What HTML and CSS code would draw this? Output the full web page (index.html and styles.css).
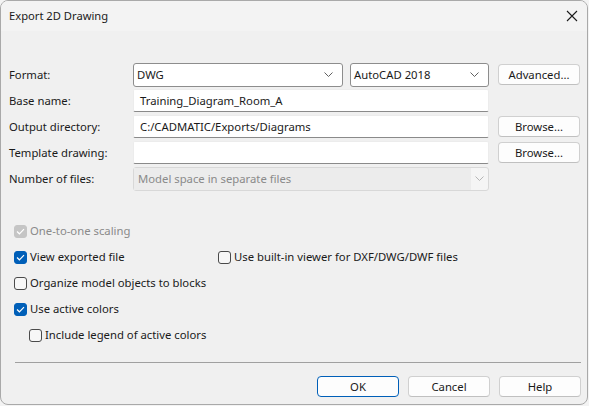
FILE: index.html
```html
<!DOCTYPE html>
<html lang="en">
<head>
<meta charset="utf-8">
<title>Export 2D Drawing</title>
<link rel="stylesheet" href="styles.css">
</head>
<body>
<div class="window">
  <div class="titlebar">
    <span class="title">Export 2D Drawing</span>
    <svg class="close" width="12" height="12" viewBox="0 0 12 12"><path d="M1 1 L11 11 M11 1 L1 11" stroke="#1b1b1b" stroke-width="1.1" fill="none"/></svg>
  </div>
  <div class="body">
    <div class="form">
      <label class="lbl">Format:</label>
      <div class="combo c-format"><span>DWG</span><svg class="chev" width="9" height="5" viewBox="0 0 9 5"><path d="M0.5 0.5 L4.5 4.5 L8.5 0.5" stroke="#606060" fill="none"/></svg></div>
      <div class="combo c-version"><span>AutoCAD 2018</span><svg class="chev" width="9" height="5" viewBox="0 0 9 5"><path d="M0.5 0.5 L4.5 4.5 L8.5 0.5" stroke="#606060" fill="none"/></svg></div>
      <button class="btn b-side">Advanced...</button>

      <label class="lbl">Base name:</label>
      <div class="edit span">Training_Diagram_Room_A</div>

      <label class="lbl">Output directory:</label>
      <div class="edit span">C:/CADMATIC/Exports/Diagrams</div>
      <button class="btn b-side">Browse...</button>

      <label class="lbl">Template drawing:</label>
      <div class="edit span"></div>
      <button class="btn b-side">Browse...</button>

      <label class="lbl">Number of files:</label>
      <div class="combo disabled span"><span class="dtext">Model space in separate files</span><span class="dbtn"><svg class="chev" width="9" height="5" viewBox="0 0 9 5"><path d="M0.5 0.5 L4.5 4.5 L8.5 0.5" stroke="#b5b5b5" fill="none"/></svg></span></div>
    </div>

    <div class="checks">
      <div class="row"><span class="cb dis"><svg width="9" height="7" viewBox="0 0 9 7"><path d="M1 3.5 L3.4 5.8 L8 1.2" stroke="#fff" stroke-width="1.2" fill="none"/></svg></span><span class="cbtext gray">One-to-one scaling</span></div>
      <div class="row">
        <div class="item w204"><span class="cb on"><svg width="9" height="7" viewBox="0 0 9 7"><path d="M1 3.5 L3.4 5.8 L8 1.2" stroke="#fff" stroke-width="1.2" fill="none"/></svg></span><span class="cbtext">View exported file</span></div>
        <div class="item"><span class="cb"></span><span class="cbtext">Use built-in viewer for DXF/DWG/DWF files</span></div>
      </div>
      <div class="row"><span class="cb"></span><span class="cbtext">Organize model objects to blocks</span></div>
      <div class="row"><span class="cb on"><svg width="9" height="7" viewBox="0 0 9 7"><path d="M1 3.5 L3.4 5.8 L8 1.2" stroke="#fff" stroke-width="1.2" fill="none"/></svg></span><span class="cbtext">Use active colors</span></div>
      <div class="row indent"><span class="cb"></span><span class="cbtext">Include legend of active colors</span></div>
    </div>

    <div class="sep"></div>

    <div class="actions">
      <button class="btn default">OK</button>
      <button class="btn">Cancel</button>
      <button class="btn">Help</button>
    </div>
  </div>
</div>
</body>
</html>
```

FILE: styles.css
```css
* { box-sizing: border-box; }
html, body { margin: 0; padding: 0; background: #f3f3f3; }
body {
  width: 589px;
  height: 406px;
  font-family: "Noto Sans", "Open Sans", sans-serif;
  font-size: 11.3px;
  color: #1a1a1a;
}
.window {
  width: 588px;
  height: 405px;
  border: 1px solid #a9a9a9;
  border-radius: 8px;
  overflow: hidden;
  background: #f0f0f0;
  display: flex;
  flex-direction: column;
}
.titlebar {
  height: 30px;
  background: #f3f3f3;
  display: flex;
  align-items: center;
  justify-content: space-between;
  padding: 0 8px 0 8px;
  flex: none;
}
.title { font-size: 11.2px; line-height: 16px; }
.close { margin-right: 1px; }
.body {
  flex: 1;
  padding: 32px 6px 0 8px;
  display: flex;
  flex-direction: column;
}
.form {
  display: grid;
  grid-template-columns: 124px 210px 7px 139px 9px 82px;
  grid-auto-rows: 23px;
  row-gap: 3px;
  align-items: center;
}
.lbl { grid-column: 1; line-height: 16px; }
.combo {
  height: 24px;
  background: #fff;
  border: 1px solid #8d8d8d;
  border-radius: 3px;
  display: flex;
  align-items: center;
  justify-content: space-between;
  padding: 0 9px 0 3px;
}
.c-format { grid-column: 2; }
.c-version { grid-column: 4; }
.chev { display: block; }
.btn {
  font: inherit;
  color: #1a1a1a;
  height: 21px;
  background: #fdfdfd;
  border: 1px solid #d0d0d0;
  border-bottom-color: #c0c0c0;
  border-radius: 4px;
  padding: 0;
  line-height: 16px;
}
.b-side { grid-column: 6; }
.span { grid-column: 2 / 5; }
.edit {
  height: 23px;
  background: #fff;
  border: 1px solid #ececec;
  border-bottom: 1px solid #8a8a8a;
  border-radius: 2px;
  padding: 0 6px;
  line-height: 21px;
}
.combo.disabled {
  background: #f5f5f5;
  border-color: #d8d8d8;
  padding: 0;
  align-items: stretch;
}
.dtext {
  flex: 1;
  background: #ececec;
  color: #8a8a8a;
  padding: 0 4px;
  line-height: 22px;
  margin: 0;
}
.dbtn {
  width: 17px;
  display: flex;
  align-items: center;
  justify-content: center;
}
.checks {
  margin-top: 28px;
  padding-left: 5px;
  display: flex;
  flex-direction: column;
}
.row {
  height: 26px;
  display: flex;
  align-items: center;
}
.item { display: flex; align-items: center; }
.w204 { width: 204px; }
.indent { padding-left: 15px; }
.cb {
  width: 13px;
  height: 13px;
  border: 1px solid #4a4a4a;
  border-radius: 3px;
  background: #f7f7f7;
  display: flex;
  align-items: center;
  justify-content: center;
  flex: none;
  margin-right: 3px;
}
.cb.on { background: #005fb8; border-color: #005fb8; }
.cb.dis { background: #c5c5c5; border-color: #c5c5c5; }
.cbtext { line-height: 16px; }
.gray { color: #8a8a8a; }
.sep {
  margin: 14px 0 0 6px;
  height: 1px;
  background: #a0a0a0;
  width: 566px;
}
.actions {
  margin-top: 13px;
  display: flex;
  justify-content: flex-end;
  gap: 9px;
}
.actions .btn { width: 82px; }
.btn.default { border: 1px solid #005fb8; }
```
